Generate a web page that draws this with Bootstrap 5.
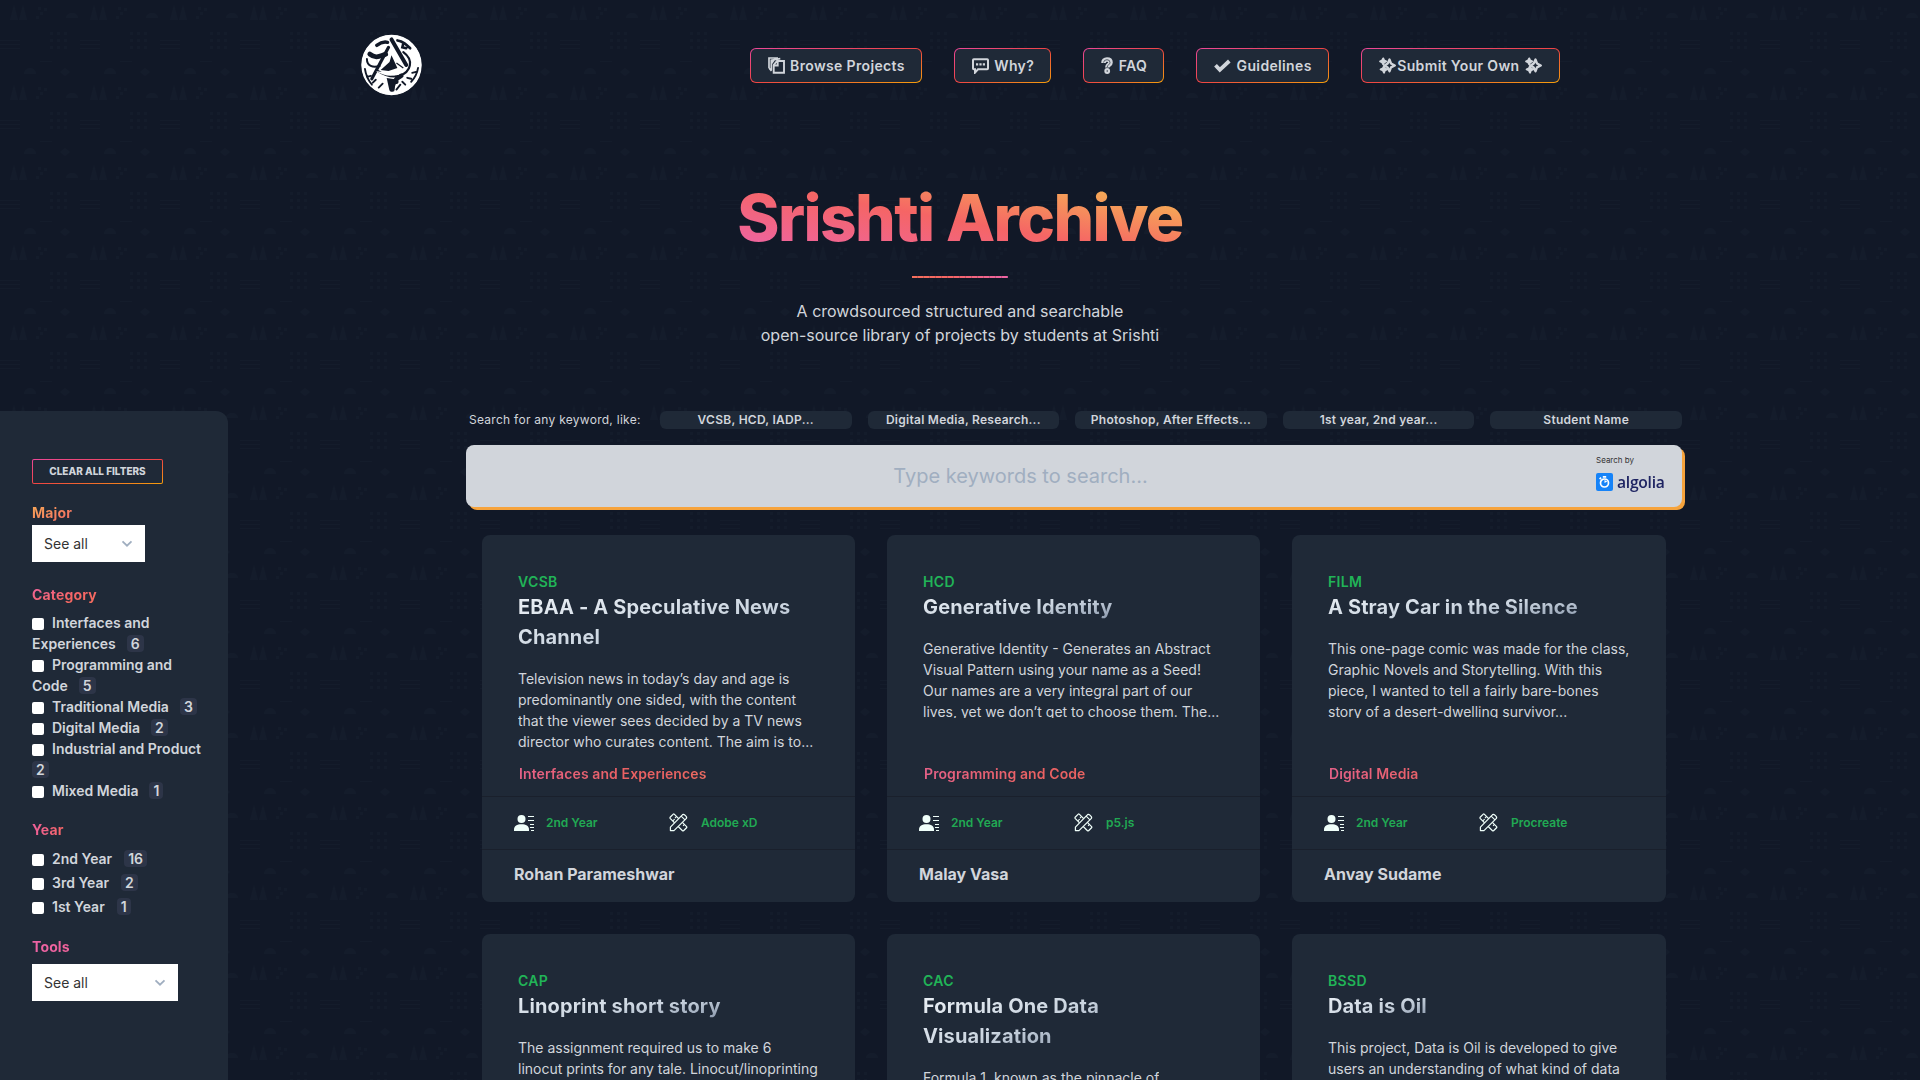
<!DOCTYPE html>
<html lang="en">
<head>
<meta charset="utf-8">
<meta name="viewport" content="width=device-width, initial-scale=1">
<title>Srishti Archive</title>
<link href="https://cdn.jsdelivr.net/npm/bootstrap@5.3.0/dist/css/bootstrap.min.css" rel="stylesheet">
<style>
html,body{height:100%}
body{overflow:hidden;font:400 14px/21px Inter,sans-serif;color:#d1d5db;background:#111827 url("data:image/svg+xml,%3Csvg xmlns='http://www.w3.org/2000/svg' width='80' height='80'%3E%3Cg fill='%23141c2b'%3E%3Cpath d='M10 20l4-15 4 15zM19 20l4-15 4 15z'/%3E%3Cpath d='M36 16h3v3h-3zM40 12h3v3h-3zM44 8h3v3h-3zM38 7h3v3h-3z'/%3E%3Cpath d='M50 32h3v3h-3zM57 32h3v3h-3zM64 32h3v3h-3zM50 39h3v3h-3zM57 39h3v3h-3zM64 39h3v3h-3zM50 46h3v3h-3zM57 46h3v3h-3zM64 46h3v3h-3z'/%3E%3Cpath d='M0 40h20v1H0zM0 44h20v1H0zM0 48h20v1H0zM40 61h12v1H40z'/%3E%3Cpath d='M66 18a6 5 0 0 1 12 0zM24 74a6 6 0 0 1 12 0zM60 72l5-4 5 4-5 4z'/%3E%3C/g%3E%3C/svg%3E")}
.page-head{width:1200px;height:131px;margin:0 auto;padding-left:1px}
.emblem{margin:-1px 0 0 0}
.top-nav{gap:32px}
.nav-pill-btn{height:35px;padding:0 16px 0 17px;gap:5.500px;border:1px solid transparent;border-radius:6px;font-weight:600;letter-spacing:.35px;color:#d1d5db;text-decoration:none;background:linear-gradient(#1f2937,#1f2937) padding-box,linear-gradient(to bottom right,#ec4899,#ef4444 50%,#f59e0b) border-box;white-space:nowrap}
.nav-pill-btn svg{width:17px;height:17px}
.nav-pill-btn .slim{width:12px}
.nav-submit{gap:1.500px;padding-right:17px}
.grad-text{-webkit-background-clip:text;background-clip:text;color:transparent}
.hero-title{font-size:64px;line-height:80px;font-weight:800;letter-spacing:-1.6px;margin:47px 0 0;background-image:linear-gradient(to top right,#ed64a6 5%,#f56565 48%,#f6ad55 85%)}
.hero-rule{width:96px;height:2px;margin-top:18px;background:repeating-linear-gradient(90deg,transparent 0 5px,#11182730 5px 6px),linear-gradient(90deg,#f56f5c,#f56565 40%,#ed64a6)}
.hero-text{font-size:16px;line-height:24px;margin-top:21px}
.main-row{height:669px;margin-top:64px}
.filters{width:228px;height:669px;background:#1f2937;border-radius:0 12px 0 0;padding:48px 24px 0 32px}
.clear-btn{display:block;width:131px;height:25px;padding:0;border:1px solid transparent;border-radius:2px;color:#d1d5db;font-size:10px;line-height:21px;font-weight:800;background:linear-gradient(#1f2937,#1f2937) padding-box,linear-gradient(to bottom right,#ec4899,#ef4444 50%,#f59e0b) border-box}
.filter-title{font-size:14px;line-height:21px;font-weight:700;letter-spacing:.15px;margin:0;width:max-content}
.t-major{margin-top:18px;background-image:linear-gradient(to bottom right,#f6ad55,#f56565)}
.t-category{margin-top:22px;background-image:linear-gradient(to bottom right,#ed64a6,#f56565 60%,#f56f5c)}
.t-year{margin-top:18px;background-image:linear-gradient(to right,#ee609a,#f56565)}
.t-tools{margin-top:17px;background-image:linear-gradient(to right,#ed64a6,#ef629a)}
.pick{height:37px;background:#fff;color:#333;padding:0 12px;font-size:14px}
.pick-major{width:113px;margin-top:2px}
.pick-tools{width:146px;margin-top:7px}
.category-list{margin-top:7px}
.tick{display:inline-block;width:12px;height:12px;border-radius:2px;background:#fff;margin-right:8px;vertical-align:-2px}
.opt{font-weight:600;width:172px}
.opt-count{display:inline-block;background:#2d3548;border-radius:4px;padding:0 4px;line-height:17px;height:17px;margin-left:11px;font-weight:600}
.year-list{margin-top:7px}
.year-list .opt{height:24px;line-height:24px}
.year-list .opt-count{margin-left:12px}
.results{width:1230px;margin-left:224px}
.hint-row{height:18px;gap:16px;font-size:12px;line-height:18px;letter-spacing:.27px}
.hint{width:191.67px;text-align:center;border-radius:6px;background:#1f2937;font-weight:600;white-space:nowrap}
.hint-lead{width:192px;padding-left:17px;white-space:nowrap}
.searchbox{height:62px;margin:16px 0 0 14px;background:#d1d5db;border-radius:8px;box-shadow:3px 3px 0 #f6a33c;font-size:20px;color:#a0aec0}
.search-hint{margin-right:107px}
.powered{right:14px;top:10px;font-size:8px;line-height:10px;color:#333}
.algolia-logo{width:72px;height:20px;margin-top:7px}
.algolia-name{font:600 17px/20px "Open Sans",sans-serif;letter-spacing:-.3px;color:#1e2462;transform:scaleX(.92);transform-origin:left}
.cards{display:grid;grid-template-columns:373px 373px 374px;gap:32px;margin:28px 0 0 30px}
.project{height:367px;border-radius:8px;background:#1f2937}
.project-main{height:262px;padding:36px 36px 0;border-bottom:1px solid #1a202c}
.major{font-weight:600;letter-spacing:.35px;color:#21b457}
.project-title{font-size:20px;line-height:30px;font-weight:700;letter-spacing:.13px;margin:0;background-image:linear-gradient(to bottom right,#edf2f7,#cbd5e0 55%,#8391a6)}
.desc{height:80px;overflow:hidden;margin:16px -6px 0 0;white-space:nowrap}
.cat{font-weight:600;letter-spacing:.1px;padding-left:1px;background-image:linear-gradient(to right,#ed64a6 -70px,#f56565 110px,#f56565 150px,#f6ad55 420px);margin-bottom:12px;opacity:.95}
.meta{height:53px;border-bottom:1px solid #1a202c;padding:0 0 1px 32px;font-size:12px;font-weight:600;color:#21a953}
.meta-year{width:155px}
.meta-year svg{margin-right:11px}
.meta-tool svg{margin-right:13px}
.author{height:48px;padding-left:32px;font-size:16px;font-weight:700}
</style>
<script src="https://cdn.jsdelivr.net/npm/bootstrap@5.3.0/dist/js/bootstrap.bundle.min.js"></script>
</head>
<body>
<svg class="d-none">
<symbol id="i-user" viewBox="0 0 21 18"><circle cx="7.500" cy="5" r="4" fill="#f0fffa"/><path d="M0 17v-1.500C0 12 3 10.200 7.500 10.200S15 12 15 15.500V17z" fill="#f0fffa"/><path d="M14 2.500h6M14 6.500h6M16 10.500h4M16 13.500h4M17 16.500h3" stroke="#f0fffa" stroke-width="1"/></symbol>
<symbol id="i-tools" viewBox="0 0 20 20"><g fill="#1f2937" stroke="#f0fffa" stroke-width="1.300" stroke-linejoin="round"><path d="M1.200 4.500 4.500 1.200Q5 .8 5.500 1.200L18.500 14.300Q19 15 18.500 15.500L15.300 18.700Q14.700 19 14.200 18.700L1.200 5.600Q.8 5 1.200 4.500z"/><path d="M1.500 18.500V14.800L13.800 2.300Q15 .8 16.500 2L18 3.500Q19.200 5 17.800 6.200L5.200 18.500z"/></g><path d="M4 8.400 6 6.500M8 3.600 6.300 5.300M12.800 3.300l4 4M16.300 12l-1.500 1.500" stroke="#f0fffa" stroke-width="1.100"/></symbol>
<symbol id="i-files" viewBox="0 0 17 17"><path d="M1 11V1h9M1 11l2.500 3M3.300 13V3.200l9-1.500M6 3 3.500 6.500" fill="none" stroke="#d1d5db" stroke-width="1.700"/><path d="M5.700 15.800V8L9 4h7v11.800zM9.700 4v4.500h-4" fill="none" stroke="#d1d5db" stroke-width="1.900"/></symbol>
<symbol id="i-chat" viewBox="0 0 17 17"><path d="M1.800 2.200h13.400q.8 0 .8.800v8.500q0 .8-.8.800H6l-3 3.300v-3.300H1.800q-.8 0-.8-.8V3q0-.8.800-.8z" fill="none" stroke="#d1d5db" stroke-width="2"/><path d="M4 6.300h2.200v2.200H4zM7.400 6.300h2.200v2.200H7.400zM10.800 6.300H13v2.200h-2.200z" fill="#d1d5db"/></symbol>
<symbol id="i-help" viewBox="0 0 12 17"><path d="M2.500 6Q2.500 2.500 6 2.500T9.500 5.500c0 2.200-3.200 2.500-3.200 5" fill="none" stroke="#d1d5db" stroke-width="4.600"/><path d="M2.500 5.500Q3 2.700 6 2.700T9 5.500c0 2-2.800 2.500-2.800 4.700" fill="none" stroke="#1f2937" stroke-width=".7"/><circle cx="6.200" cy="14" r="2.900" fill="#d1d5db"/><circle cx="6.200" cy="14" r=".7" fill="#1f2937"/></symbol>
<symbol id="i-check" viewBox="0 0 17 17"><path d="m1.500 8.300 4.300 4.500L15.300 4" fill="none" stroke="#d1d5db" stroke-width="3.800"/></symbol>
<symbol id="i-spark" viewBox="0 0 17 17"><path d="M10.500 2.500 12 6.500l3.800 2-3.800 1.900-1.500 4-1.800-4-3-1.900 3-2z" fill="#1f2937" stroke="#d1d5db" stroke-width="2.300" stroke-linejoin="round"/><path d="m4.200 1.500.9 1.900 2 .9-2 1.100-.9 2-1-2-2-1.100 2-.9zM5 9.200l.9 2.200 2.200 1-2.200 1-.9 2.200-1.100-2.200-2.200-1 2.200-1z" fill="#d1d5db" stroke="#d1d5db" stroke-width="2" stroke-linejoin="round"/></symbol>
<symbol id="i-down" viewBox="0 0 12 8"><path d="m1.500 1.300 4.500 4.400 4.500-4.400" fill="none" stroke="#a0aec0" stroke-width="1.800"/></symbol>
</svg>

<header class="page-head d-flex align-items-center justify-content-between">
<svg class="emblem" width="61" height="62" viewBox="0 0 62 62" aria-label="Srishti emblem">
<circle cx="31" cy="31" r="30.300" fill="#fff"/>
<g fill="none" stroke="#111827" stroke-linecap="round">
<path d="M28 13 11 45" stroke-width="3.200"/><path d="M31 5 46 31" stroke-width="4"/>
<path d="M9 20C15 25 19 22 25 20" stroke-width="5"/><path d="M6 25c0 7 6 9 13 7" stroke-width="2"/>
<path d="M43 18c11 8 8 20-4 24-8 2-16-1-22-5" stroke-width="2.200"/>
<path d="M16 11c4-3 7-4 11-3" stroke-width="3.500"/><path d="M37 6c6 1 9 4 13 8M43 9l-1 4 4 1" stroke-width="2.600"/>
<path d="M4 35c1 7 3 11 7 16M6 43l4-1M12 49l3-3M18 54l4-4" stroke-width="1.900"/>
<path d="M58 34c-1 6-3 10-7 14M56 38l-4 1M51 45l-4-1M45 51l-3-3M36 56l4-5" stroke-width="1.900"/>
<path d="M32 56c0-7 3-11 9-14M31 56l-2-9 7 1" stroke-width="4.500"/>
</g>
<path d="M24 27 31 17l12 19-7-3-5-10z" fill="#fff"/><path d="m20 36 9-8 2-7 6 13-9 3z" fill="#111827"/><path d="m36 29 7 5" stroke="#111827" stroke-width="1.300"/><path d="M15 37q15 3 31-3-13 14-31 3z" fill="#fff"/>
<circle cx="31" cy="31" r="30" fill="none" stroke="#fff" stroke-width="1.300"/>
</svg>
<nav class="top-nav d-flex">
<a class="nav-pill-btn d-flex align-items-center" href="#"><svg><use href="#i-files"/></svg><span>Browse Projects</span></a>
<a class="nav-pill-btn d-flex align-items-center" href="#"><svg><use href="#i-chat"/></svg><span>Why?</span></a>
<a class="nav-pill-btn d-flex align-items-center" href="#"><svg class="slim"><use href="#i-help"/></svg><span>FAQ</span></a>
<a class="nav-pill-btn d-flex align-items-center" href="#"><svg><use href="#i-check"/></svg><span>Guidelines</span></a>
<a class="nav-pill-btn nav-submit d-flex align-items-center" href="#"><svg><use href="#i-spark"/></svg><span class="me-1">Submit Your Own</span><svg><use href="#i-spark"/></svg></a>
</nav>
</header>

<section class="d-flex flex-column align-items-center text-center">
<h1 class="hero-title grad-text">Srishti Archive</h1>
<div class="hero-rule"></div>
<p class="hero-text mb-0">A crowdsourced structured and searchable<br>open-source library of projects by students at Srishti</p>
</section>

<div class="main-row d-flex">
<aside class="filters flex-shrink-0">
<button class="clear-btn">CLEAR ALL FILTERS</button>
<h2 class="filter-title t-major grad-text">Major</h2>
<div class="pick pick-major d-flex align-items-center justify-content-between">See all<svg width="12" height="8"><use href="#i-down"/></svg></div>
<h2 class="filter-title t-category grad-text">Category</h2>
<div class="category-list">
<div class="opt"><i class="tick"></i>Interfaces and Experiences<span class="opt-count">6</span></div>
<div class="opt"><i class="tick"></i>Programming and Code<span class="opt-count">5</span></div>
<div class="opt"><i class="tick"></i>Traditional Media<span class="opt-count">3</span></div>
<div class="opt"><i class="tick"></i>Digital Media<span class="opt-count">2</span></div>
<div class="opt"><i class="tick"></i>Industrial and Product<br><span class="opt-count ms-0">2</span></div>
<div class="opt"><i class="tick"></i>Mixed Media<span class="opt-count">1</span></div>
</div>
<h2 class="filter-title t-year grad-text">Year</h2>
<div class="year-list">
<div class="opt"><i class="tick"></i>2nd Year<span class="opt-count">16</span></div>
<div class="opt"><i class="tick"></i>3rd Year<span class="opt-count">2</span></div>
<div class="opt"><i class="tick"></i>1st Year<span class="opt-count">1</span></div>
</div>
<h2 class="filter-title t-tools grad-text">Tools</h2>
<div class="pick pick-tools d-flex align-items-center justify-content-between">See all<svg width="12" height="8"><use href="#i-down"/></svg></div>
</aside>

<main class="results flex-shrink-0">
<div class="hint-row d-flex">
<div class="hint-lead">Search for any keyword, like:</div>
<div class="hint">VCSB, HCD, IADP...</div><div class="hint">Digital Media, Research...</div><div class="hint">Photoshop, After Effects...</div><div class="hint">1st year, 2nd year...</div><div class="hint">Student Name</div>
</div>
<div class="searchbox position-relative d-flex align-items-center justify-content-center"><span class="search-hint">Type keywords to search...</span>
<div class="powered position-absolute"><div>Search by</div><div class="algolia-logo d-flex align-items-center"><svg width="17" height="18" viewBox="0 0 17 18" class="flex-shrink-0 me-1 ms-0"><rect width="17" height="18" rx="2" fill="#1683f8"/><circle cx="8.500" cy="10" r="4" fill="none" stroke="#fff" stroke-width="1.700"/><path d="M8.500 10V7l2.800 1.600zM6.800 3h3.400v1.800H6.800zM3 5.500l1.500-1.400 1.200 1.200-1.400 1.500z" fill="#fff"/></svg><span class="algolia-name">algolia</span></div></div>
</div>
<div class="cards" id="cards"></div>
</main>
</div>
<script>
const projects=[
["VCSB","EBAA - A Speculative News Channel","Television news in today’s day and age is<br>predominantly one sided, with the content<br>that the viewer sees decided by a TV news<br>director who curates content. The aim is to...","Interfaces and Experiences","Adobe xD","Rohan Parameshwar"],
["HCD","Generative Identity","Generative Identity - Generates an Abstract<br>Visual Pattern using your name as a Seed!<br>Our names are a very integral part of our<br>lives, yet we don’t get to choose them. The...","Programming and Code","p5.js","Malay Vasa"],
["FILM","A Stray Car in the Silence","This one-page comic was made for the class,<br>Graphic Novels and Storytelling. With this<br>piece, I wanted to tell a fairly bare-bones<br>story of a desert-dwelling survivor...","Digital Media","Procreate","Anvay Sudame"],
["CAP","Linoprint short story","The assignment required us to make 6<br>linocut prints for any tale. Linocut/linoprinting"],
["CAC","Formula One Data<br>Visualization","Formula 1, known as the pinnacle of"],
["BSSD","Data is Oil","This project, Data is Oil is developed to give<br>users an understanding of what kind of data"]];
document.getElementById("cards").innerHTML=projects.map(p=>`<article class="project"><div class="project-main d-flex flex-column align-items-start"><div class="major">${p[0]}</div><h3 class="project-title grad-text">${p[1]}</h3><p class="desc mb-0">${p[2]}</p>${p[3]?`<div class="cat grad-text mt-auto">${p[3]}</div>`:""}</div>${p[3]?`<div class="meta d-flex align-items-center"><div class="meta-year d-flex align-items-center"><svg width="21" height="18"><use href="#i-user"/></svg>2nd Year</div><div class="meta-tool d-flex align-items-center"><svg width="19" height="19"><use href="#i-tools"/></svg>${p[4]}</div></div><div class="author d-flex align-items-center">${p[5]}</div>`:""}</article>`).join("");
</script>
</body>
</html>
